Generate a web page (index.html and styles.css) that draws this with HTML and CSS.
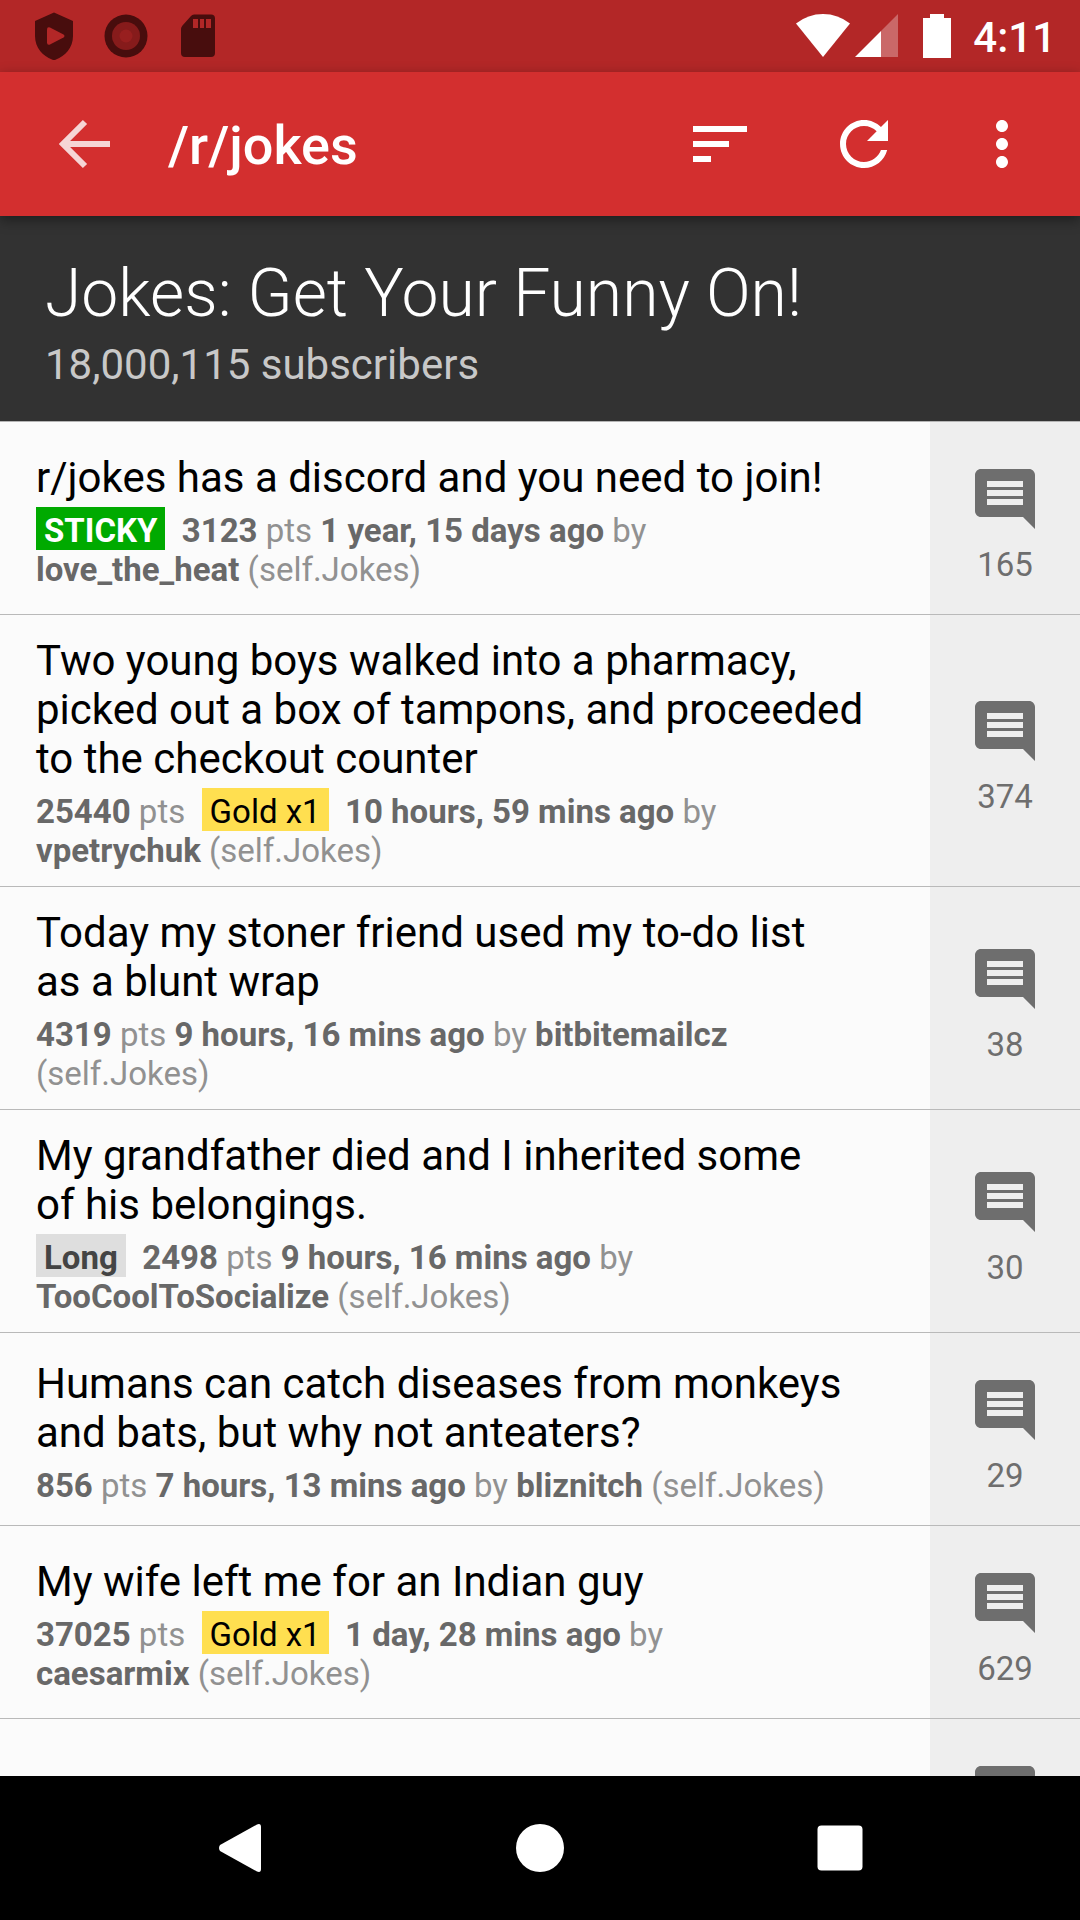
FILE: index.html
```html
<!DOCTYPE html>
<html lang="en">
<head>
<meta charset="utf-8">
<meta name="viewport" content="width=device-width, initial-scale=1">
<title>/r/jokes</title>
<link rel="stylesheet" href="styles.css">
</head>
<body>
<svg class="sprite" aria-hidden="true">
  <symbol id="comment" viewBox="0 0 24 24"><path d="M22 4c0-1.1-.9-2-2-2H4c-1.1 0-2 .9-2 2v12c0 1.1.9 2 2 2h14l4 4V4zM18 14H6v-2h12v2zm0-3H6V9h12v2zm0-3H6V6h12v2z"/></symbol>
</svg>
<div class="app">
  <div class="status">
    <div class="notices">
      <svg class="notice" viewBox="0 0 48 72"><path fill="#480d0d" d="M24 12.500L43 21V36C43 48 35 56 26 59.500Q24 60.500 22 59.500C13 56 5 48 5 36V21Z"/><path fill="#b32727" d="M17 29.500q0-3 3-2l13.500 7q2 1.500 0 3l-13.500 7q-3 1-3-2Z"/></svg>
      <svg class="notice" viewBox="0 0 48 72"><circle cx="24" cy="36" r="21.500" fill="#480d0d"/><circle cx="24" cy="36" r="14" fill="#861b1b"/><circle cx="24" cy="36" r="6.500" fill="#981f1f"/></svg>
      <svg class="notice" viewBox="0 0 48 72"><path fill="#480d0d" d="M20 14.500H37q4 0 4 4V53q0 4-4 4H11q-4 0-4-4V29q0-2 1.500-3.500L17 16q1.200-1.500 3-1.500Z"/><path fill="#b32727" d="M19 19h5v9h-5zM26 19h4v9h-4zM32 19h5v9h-5z"/></svg>
    </div>
    <div class="signals">
      <svg class="wifi" viewBox="0 0 54 72"><path fill="#fff" d="M0 23.500Q12 14 27 14T54 23.500L27 57Z"/></svg>
      <svg class="cell" viewBox="0 0 43 72"><path fill="#fff" opacity=".3" d="M43 14V57H26V31Z"/><path fill="#fff" d="M0 57L26 31V57Z"/></svg>
      <svg class="battery" viewBox="0 0 28 72"><path fill="#fff" d="M7 14H21V18H28V58H0V18H7Z"/></svg>
      <time class="clock">4:11</time>
    </div>
  </div>
  <header class="toolbar">
    <button class="tool tool-back" aria-label="Back"><svg class="icon" viewBox="0 0 72 72"><path fill="none" stroke="#f6d5d5" stroke-width="6" d="M62 36H15M37 14L15 36L37 58"/></svg></button>
    <h1 class="page-name">/r/jokes</h1>
    <button class="tool" aria-label="Sort"><svg class="icon" viewBox="0 0 24 24"><path fill="#fff" d="M3 18h6v-2H3v2zM3 6v2h18V6H3zm0 7h12v-2H3v2z"/></svg></button>
    <button class="tool" aria-label="Refresh"><svg class="icon" viewBox="0 0 24 24"><path fill="#fff" d="M17.650 6.350C16.200 4.900 14.210 4 12 4c-4.420 0-7.990 3.580-7.990 8s3.570 8 7.990 8c3.730 0 6.840-2.550 7.730-6h-2.080c-.82 2.330-3.040 4-5.650 4-3.310 0-6-2.690-6-6s2.690-6 6-6c1.660 0 3.140.69 4.220 1.780L13 11h7V4l-2.350 2.350z"/></svg></button>
    <button class="tool tool-more" aria-label="More options"><svg class="icon" viewBox="0 0 24 24"><path fill="#fff" d="M12 8c1.100 0 2-.9 2-2s-.9-2-2-2-2 .9-2 2 .9 2 2 2zm0 2c-1.100 0-2 .9-2 2s.9 2 2 2 2-.9 2-2-.9-2-2-2zm0 6c-1.100 0-2 .9-2 2s.9 2 2 2 2-.9 2-2-.9-2-2-2z"/></svg></button>
  </header>
  <main class="feed">
    <section class="banner">
      <h2 class="banner-title">Jokes: Get Your Funny On!</h2>
      <p class="banner-sub">18,000,115 subscribers</p>
    </section>
    <article class="post">
      <div class="body">
        <h3 class="title">r/jokes has a discord and you need to join!</h3>
        <p class="meta"><span class="badge sticky">STICKY</span>&nbsp; <b>3123</b> pts <b>1 year, 15 days ago</b> by<br><b>love_the_heat</b> (self.Jokes)</p>
      </div>
      <button class="comments" aria-label="165 comments"><svg class="icon"><use href="#comment"/></svg><span>165</span></button>
    </article>
    <article class="post">
      <div class="body">
        <h3 class="title">Two young boys walked into a pharmacy,<br>picked out a box of tampons, and proceeded<br>to the checkout counter</h3>
        <p class="meta"><b>25440</b> pts&nbsp; <span class="badge gold">Gold x1</span>&nbsp; <b>10 hours, 59 mins ago</b> by<br><b>vpetrychuk</b> (self.Jokes)</p>
      </div>
      <button class="comments" aria-label="374 comments"><svg class="icon"><use href="#comment"/></svg><span>374</span></button>
    </article>
    <article class="post">
      <div class="body">
        <h3 class="title">Today my stoner friend used my to-do list<br>as a blunt wrap</h3>
        <p class="meta"><b>4319</b> pts <b>9 hours, 16 mins ago</b> by <b>bitbitemailcz</b><br>(self.Jokes)</p>
      </div>
      <button class="comments" aria-label="38 comments"><svg class="icon"><use href="#comment"/></svg><span>38</span></button>
    </article>
    <article class="post">
      <div class="body">
        <h3 class="title">My grandfather died and I inherited some<br>of his belongings.</h3>
        <p class="meta"><span class="badge flair">Long</span>&nbsp; <b>2498</b> pts <b>9 hours, 16 mins ago</b> by<br><b>TooCoolToSocialize</b> (self.Jokes)</p>
      </div>
      <button class="comments" aria-label="30 comments"><svg class="icon"><use href="#comment"/></svg><span>30</span></button>
    </article>
    <article class="post">
      <div class="body">
        <h3 class="title">Humans can catch diseases from monkeys<br>and bats, but why not anteaters?</h3>
        <p class="meta"><b>856</b> pts <b>7 hours, 13 mins ago</b> by <b>bliznitch</b> (self.Jokes)</p>
      </div>
      <button class="comments" aria-label="29 comments"><svg class="icon"><use href="#comment"/></svg><span>29</span></button>
    </article>
    <article class="post">
      <div class="body">
        <h3 class="title">My wife left me for an Indian guy</h3>
        <p class="meta"><b>37025</b> pts&nbsp; <span class="badge gold">Gold x1</span>&nbsp; <b>1 day, 28 mins ago</b> by<br><b>caesarmix</b> (self.Jokes)</p>
      </div>
      <button class="comments" aria-label="629 comments"><svg class="icon"><use href="#comment"/></svg><span>629</span></button>
    </article>
    <article class="post">
      <div class="body"></div>
      <button class="comments" aria-label="Comments"><svg class="icon"><use href="#comment"/></svg><span>&nbsp;</span></button>
    </article>
  </main>
  <nav class="navbar">
    <button class="nav-key" aria-label="Back"><svg class="icon" viewBox="0 0 72 72"><path fill="#fff" d="M16 33L53 12.500Q57 11 57 15V57Q57 61 53 59.500L16 39Q14 36 16 33Z"/></svg></button>
    <button class="nav-key" aria-label="Home"><svg class="icon" viewBox="0 0 72 72"><circle cx="36" cy="36" r="24" fill="#fff"/></svg></button>
    <button class="nav-key" aria-label="Recent apps"><svg class="icon" viewBox="0 0 72 72"><rect x="13.500" y="13.500" width="45" height="45" rx="4" fill="#fff"/></svg></button>
  </nav>
</div>
</body>
</html>
```
FILE: styles.css
```css
* { box-sizing: border-box; margin: 0; padding: 0; }

body {
  font-family: Roboto, "Liberation Sans", sans-serif;
  background: #fbfbfb;
  color: #000;
}

button {
  border: 0;
  background: none;
  font: inherit;
  color: inherit;
}

.sprite { display: none; }
.icon { display: block; width: 72px; height: 72px; fill: currentColor; }

.app { display: flex; flex-direction: column; height: 100vh; }

/* System status bar */
.status {
  display: flex;
  flex: none;
  justify-content: space-between;
  height: 72px;
  padding: 0 24px 0 30px;
  background: #b32727;
}
.notices { display: flex; gap: 24px; }
.notice { width: 48px; height: 72px; }
.signals { display: flex; align-items: center; }
.wifi { width: 54px; height: 72px; margin-right: 5px; }
.cell { width: 43px; height: 72px; margin-right: 25px; }
.battery { width: 28px; height: 72px; margin-right: 22px; }
.clock { padding-top: 2px; color: #fff; font-size: 42px; line-height: 49px; font-weight: 500; }

/* App toolbar */
.toolbar {
  display: flex;
  flex: none;
  align-items: center;
  height: 144px;
  padding-right: 12px;
  background: #d32f2f;
  box-shadow: 0 4px 12px rgba(0, 0, 0, .4);
  z-index: 1;
}
.tool { display: grid; place-items: center; width: 144px; height: 144px; }
.tool-back { width: 168px; }
.tool-more { width: 132px; }
.page-name {
  flex: 1;
  padding-top: 4px;
  color: #fff;
  font-size: 54px;
  line-height: 64px;
  font-weight: 500;
}

/* Scrolling list */
.feed { flex: 1; min-height: 0; overflow: hidden; }
.banner {
  padding: 39px 45px 32px;
  background: #323232;
  border-bottom: 1px solid #b4b4b4;
}
.banner-title { color: #fff; font-size: 66px; line-height: 77px; font-weight: 300; }
.banner-sub { margin-top: 8px; color: #c8c8c8; font-size: 42px; line-height: 49px; }

.post { display: flex; min-height: 193px; border-bottom: 1px solid #b9b9b9; }
.body {
  display: flex;
  flex: 1;
  flex-direction: column;
  justify-content: center;
  padding: 21px 36px 16px;
}
.title { font-size: 42px; line-height: 49px; font-weight: 400; }
.meta { margin-top: 9px; color: #919191; font-size: 33px; line-height: 39px; }
.meta b { color: #686868; font-weight: 700; }

.badge { padding: 4px 8px 0; }
.sticky { background: #00aa00; color: #fff; font-weight: 700; }
.gold { background: #ffdf50; color: #000; }
.flair { background: #dedede; color: #444; font-weight: 700; }

.comments {
  display: flex;
  flex: none;
  flex-direction: column;
  align-items: center;
  justify-content: center;
  gap: 10px;
  width: 150px;
  padding-top: 10px;
  background: #eee;
  color: #6e6e6e;
  font-size: 33px;
  line-height: 39px;
}

/* System navigation keys */
.navbar {
  display: flex;
  flex: none;
  height: 144px;
  padding: 0 90px;
  background: #000;
}
.nav-key { display: grid; flex: 1; place-items: center; }
```
